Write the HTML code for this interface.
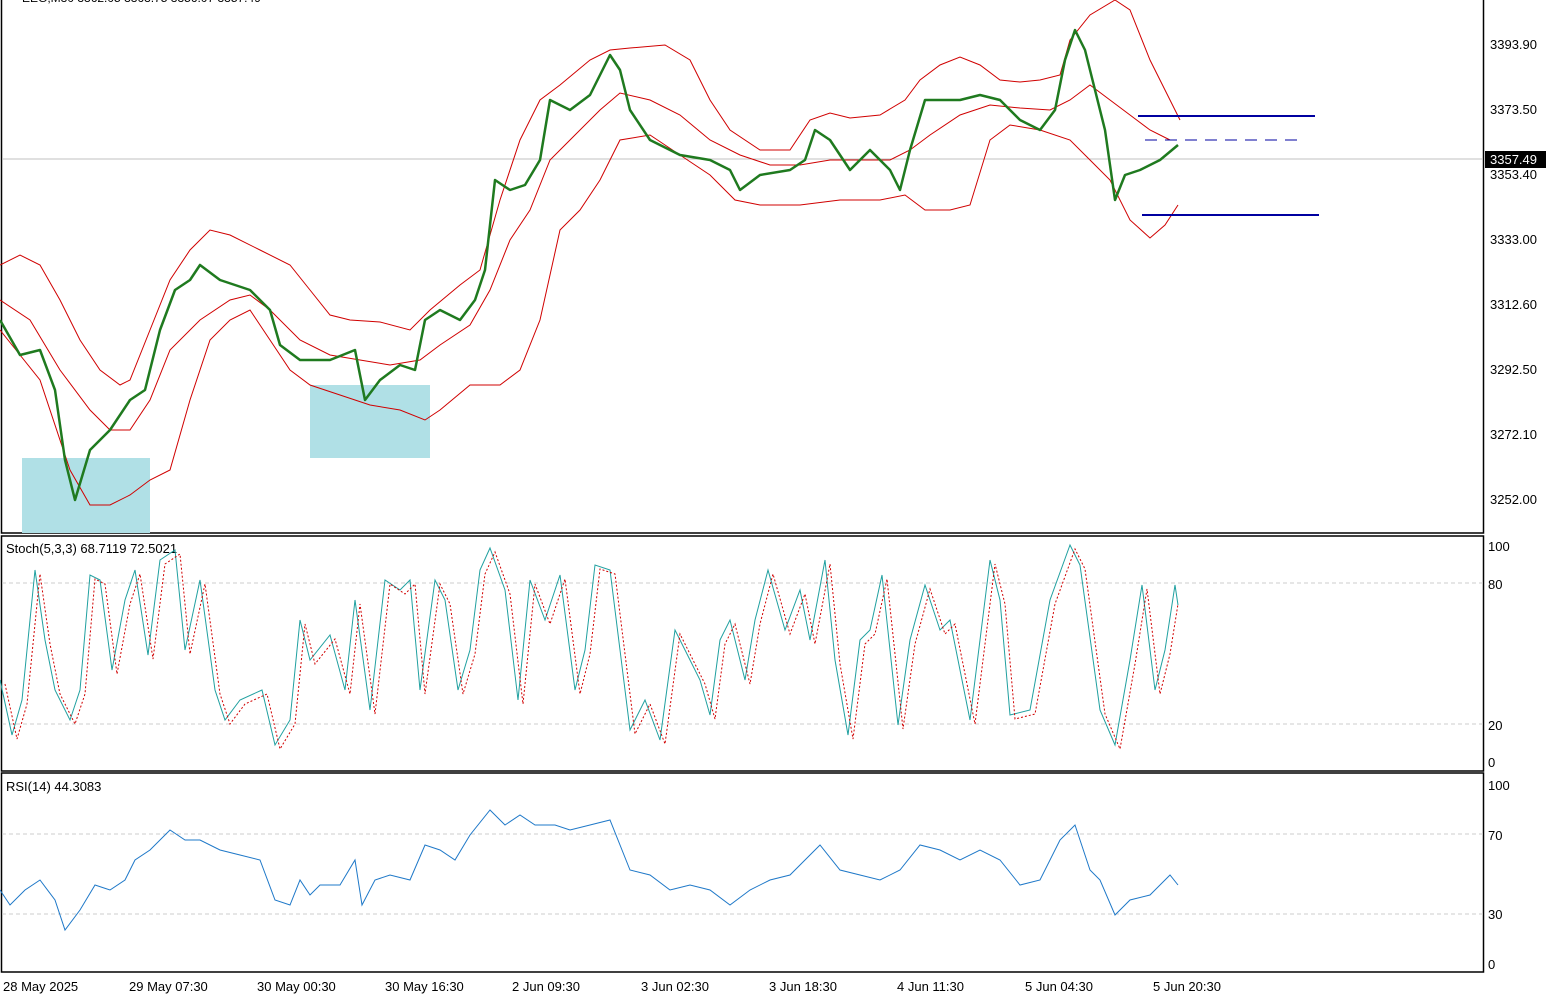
<!DOCTYPE html>
<html><head><style>
body{margin:0;background:#fff;}
svg{display:block;font-family:"Liberation Sans","DejaVu Sans",sans-serif;font-size:13px;}
</style></head><body>
<svg width="1546" height="999" viewBox="0 0 1546 999" xmlns="http://www.w3.org/2000/svg">
<rect width="1546" height="999" fill="#fff"/>
<rect x="1.5" y="-2" width="1482" height="535" fill="none" stroke="#000" stroke-width="1.5"/>
<rect x="1.5" y="536" width="1482" height="235" fill="none" stroke="#000" stroke-width="1.5"/>
<rect x="1.5" y="773" width="1482" height="199" fill="none" stroke="#000" stroke-width="1.5"/>
<text x="22" y="2" font-size="12" fill="#000">EEG,M30  3362.05 3363.75 3356.07 3357.49</text>
<rect x="22" y="458" width="128" height="75" fill="#b0e0e6"/>
<rect x="310" y="385" width="120" height="73" fill="#b0e0e6"/>
<line x1="2" y1="159" x2="1483" y2="159" stroke="#c0c0c0"/>
<g fill="none" stroke="#d00000" stroke-width="1">
<polyline points="0,265 20,255 40,265 60,300 80,340 100,370 120,385 130,380 150,330 170,280 190,250 210,230 230,235 260,250 290,265 310,290 330,315 350,320 380,322 410,330 430,310 460,285 480,270 500,200 520,140 540,100 560,85 590,60 610,50 630,48 665,45 690,60 710,100 730,130 760,150 790,150 810,120 830,113 850,118 880,115 905,100 920,80 940,65 960,57 980,65 1000,80 1020,82 1040,80 1060,75 1070,40 1090,15 1115,0 1130,10 1150,60 1170,100 1180,120"/>
<polyline points="0,300 30,320 60,370 90,410 110,430 130,430 150,400 170,350 200,320 230,300 250,295 270,310 300,340 330,355 360,360 390,365 420,360 440,345 470,325 490,290 510,240 530,210 550,160 570,140 600,110 620,93 650,100 680,115 710,140 740,155 770,165 800,165 830,160 860,160 890,160 910,150 930,135 960,115 990,105 1020,108 1050,110 1070,100 1090,85 1110,100 1130,115 1150,130 1170,140"/>
<polyline points="0,330 40,380 70,470 90,505 110,505 130,495 150,480 170,470 190,400 210,340 230,320 250,310 270,340 290,370 310,385 340,395 370,405 400,410 425,420 440,410 470,385 500,385 520,370 540,320 560,230 580,210 600,180 620,140 650,135 680,155 710,175 735,200 760,205 800,205 840,200 880,200 905,195 925,210 950,210 970,205 990,140 1010,125 1040,130 1070,140 1090,160 1110,180 1130,220 1150,238 1165,225 1178,205"/>
</g>
<polyline fill="none" stroke="#1f7a1f" stroke-width="2.5" stroke-linejoin="round" points="0,320 20,355 40,350 55,390 65,460 75,500 90,450 110,430 130,400 145,390 160,330 175,290 190,280 200,265 220,280 250,290 270,310 280,345 300,360 330,360 355,350 365,400 380,380 400,365 415,370 425,320 440,310 460,320 475,300 485,270 495,180 510,190 525,185 540,160 550,100 570,110 590,95 610,55 620,70 630,110 650,140 680,155 710,160 730,170 740,190 760,175 790,170 805,160 815,130 830,140 850,170 870,150 890,170 900,190 910,150 925,100 940,100 960,100 980,95 1000,100 1020,120 1040,130 1055,110 1065,60 1075,30 1085,50 1095,90 1105,130 1115,200 1125,175 1140,170 1160,160 1178,145"/>
<line x1="1138" y1="116" x2="1315" y2="116" stroke="#0000a0" stroke-width="2"/>
<line x1="1142" y1="215" x2="1319" y2="215" stroke="#0000a0" stroke-width="2"/>
<line x1="1145" y1="140" x2="1305" y2="140" stroke="#0000a0" stroke-dasharray="12,8"/>
<g fill="#000" font-size="13">
<text x="1490" y="49">3393.90</text><text x="1490" y="114">3373.50</text>
<text x="1490" y="179">3353.40</text><text x="1490" y="244">3333.00</text>
<text x="1490" y="309">3312.60</text><text x="1490" y="374">3292.50</text>
<text x="1490" y="439">3272.10</text><text x="1490" y="504">3252.00</text>
</g>
<rect x="1485" y="151" width="61" height="17" fill="#000"/>
<text x="1490" y="164" fill="#fff">3357.49</text>
<text x="6" y="553" font-size="13">Stoch(5,3,3) 68.7119 72.5021</text>
<line x1="2" y1="583" x2="1483" y2="583" stroke="#ccc" stroke-dasharray="4,3"/>
<line x1="2" y1="724" x2="1483" y2="724" stroke="#ccc" stroke-dasharray="4,3"/>
<polyline fill="none" stroke="#20a0a0" points="0,680 12,735 22,700 35,570 45,640 55,690 70,720 80,690 90,575 100,580 112,670 125,600 135,570 148,655 160,560 175,550 185,650 200,580 215,690 225,720 240,700 262,690 275,745 290,720 300,620 310,660 330,635 345,690 355,600 370,710 385,580 400,590 410,580 420,690 435,580 445,600 458,690 470,650 480,570 490,548 505,590 518,700 530,580 545,620 560,575 575,690 585,650 595,565 610,570 620,650 630,730 645,700 660,740 675,630 690,660 700,680 710,715 720,640 730,620 745,680 755,620 768,570 785,630 800,590 810,640 825,560 835,660 848,735 860,640 870,630 882,575 898,725 910,640 925,585 940,630 950,620 970,720 990,560 1000,600 1010,715 1030,710 1050,600 1070,545 1080,565 1100,710 1115,745 1130,660 1142,585 1155,690 1165,650 1175,585 1178,605"/>
<polyline fill="none" stroke="#d00000" stroke-dasharray="2,2" transform="translate(5,4)" points="0,680 12,735 22,700 35,570 45,640 55,690 70,720 80,690 90,575 100,580 112,670 125,600 135,570 148,655 160,560 175,550 185,650 200,580 215,690 225,720 240,700 262,690 275,745 290,720 300,620 310,660 330,635 345,690 355,600 370,710 385,580 400,590 410,580 420,690 435,580 445,600 458,690 470,650 480,570 490,548 505,590 518,700 530,580 545,620 560,575 575,690 585,650 595,565 610,570 620,650 630,730 645,700 660,740 675,630 690,660 700,680 710,715 720,640 730,620 745,680 755,620 768,570 785,630 800,590 810,640 825,560 835,660 848,735 860,640 870,630 882,575 898,725 910,640 925,585 940,630 950,620 970,720 990,560 1000,600 1010,715 1030,710 1050,600 1070,545 1080,565 1100,710 1115,745 1130,660 1142,585 1155,690 1165,650 1173,600"/>
<g font-size="13"><text x="1488" y="551">100</text><text x="1488" y="589">80</text><text x="1488" y="730">20</text><text x="1488" y="767">0</text></g>
<text x="6" y="791" font-size="13">RSI(14) 44.3083</text>
<line x1="2" y1="834" x2="1483" y2="834" stroke="#ccc" stroke-dasharray="4,3"/>
<line x1="2" y1="914" x2="1483" y2="914" stroke="#ccc" stroke-dasharray="4,3"/>
<polyline fill="none" stroke="#1e78c8" points="0,890 10,905 25,890 40,880 55,900 65,930 80,910 95,885 110,890 125,880 135,860 150,850 170,830 185,840 200,840 220,850 240,855 260,860 275,900 290,905 300,880 310,895 320,885 340,885 355,860 362,905 375,880 390,875 410,880 425,845 440,850 455,860 470,835 490,810 505,825 520,815 535,825 555,825 570,830 590,825 610,820 630,870 650,875 670,890 690,885 710,890 730,905 750,890 770,880 790,875 805,860 820,845 840,870 860,875 880,880 900,870 920,845 940,850 960,860 980,850 1000,860 1020,885 1040,880 1060,840 1075,825 1090,870 1100,880 1115,915 1130,900 1150,895 1170,875 1178,885"/>
<g font-size="13"><text x="1488" y="790">100</text><text x="1488" y="840">70</text><text x="1488" y="919">30</text><text x="1488" y="969">0</text></g>
<g font-size="13">
<text x="3" y="991">28 May 2025</text><text x="129" y="991">29 May 07:30</text>
<text x="257" y="991">30 May 00:30</text><text x="385" y="991">30 May 16:30</text>
<text x="512" y="991">2 Jun 09:30</text><text x="641" y="991">3 Jun 02:30</text>
<text x="769" y="991">3 Jun 18:30</text><text x="897" y="991">4 Jun 11:30</text>
<text x="1025" y="991">5 Jun 04:30</text><text x="1153" y="991">5 Jun 20:30</text>
</g>
</svg>
</body></html>
